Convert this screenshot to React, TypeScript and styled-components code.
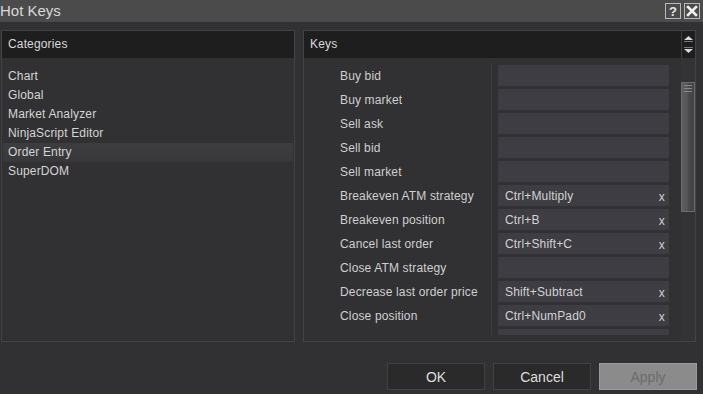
import React from "react";
import styled, { createGlobalStyle } from "styled-components";

const GlobalStyle = createGlobalStyle`
  html, body { margin: 0; padding: 0; background: #313133; overflow: hidden; }
  * { box-sizing: border-box; }
`;

const Window = styled.div`
  width: 703px;
  height: 394px;
  background: #313133;
  display: flex;
  flex-direction: column;
  font-family: "Liberation Sans", Arial, sans-serif;
  color: #d2d2d2;
`;

const TitleBar = styled.div`
  height: 22px;
  background: #4b4b4b;
  display: flex;
  align-items: center;
  justify-content: space-between;
  padding-right: 3px;
  flex-shrink: 0;
`;

const Title = styled.div`
  font-size: 15px;
  color: #d8d8d8;
  line-height: 22px;
`;

const TitleButtons = styled.div`
  display: flex;
  gap: 3px;
`;

const TitleButton = styled.div`
  width: 16px;
  height: 16px;
  border: 1px solid #b8b8b8;
  background: #4b4b4b;
  display: flex;
  align-items: center;
  justify-content: center;
  color: #e8e8e8;
  font-weight: bold;
  font-size: 13px;
  line-height: 1;
`;

const Panels = styled.div`
  display: flex;
  gap: 8px;
  padding: 8px 7px 0 1px;
  height: 320px;
  flex-shrink: 0;
`;

const Panel = styled.div<{ $width?: number }>`
  border: 1px solid #434345;
  display: flex;
  flex-direction: column;
  ${(p) => (p.$width ? `width: ${p.$width}px;` : `flex: 1;`)}
  min-width: 0;
`;

const Header = styled.div`
  height: 27px;
  background: #1e1e1e;
  display: flex;
  flex-shrink: 0;
`;

const HeaderLabel = styled.div<{ $pad: number }>`
  flex: 1;
  font-size: 12px;
  letter-spacing: 0.15px;
  line-height: 27px;
  padding-left: ${(p) => p.$pad}px;
  color: #d8d8d8;
`;

const HeaderArrows = styled.div`
  width: 14px;
  border-left: 1px solid #3c3c3c;
  display: flex;
  flex-direction: column;
  align-items: center;
  justify-content: space-between;
  padding: 5px 0 5px;
`;

const CategoryList = styled.div`
  padding: 9px 1px 8px;
  display: flex;
  flex-direction: column;
`;

const CategoryItem = styled.div<{ $selected?: boolean }>`
  height: 19px;
  line-height: 17px;
  padding-top: 1px;
  font-size: 12px;
  letter-spacing: 0.15px;
  padding-left: 5px;
  color: #d4d4d4;
  background: ${(p) =>
    p.$selected ? "linear-gradient(#3d3d3f, #38383a)" : "transparent"};
`;

const KeysBody = styled.div`
  flex: 1;
  display: flex;
  min-height: 0;
`;

const KeysViewport = styled.div`
  flex: 1;
  overflow: hidden;
  padding-top: 5px;
  margin-bottom: 6px;
`;

const KeyRow = styled.div`
  display: grid;
  grid-template-columns: 187px 1fr;
  height: 24px;
`;

const KeyLabel = styled.div`
  padding: 1px 0 0 36px;
  font-size: 12px;
  letter-spacing: 0.15px;
  line-height: 24px;
  color: #cfcfcf;
  white-space: nowrap;
`;

const KeyCell = styled.div`
  border-left: 1px solid #3c3c3e;
  padding: 2px 12px 1px 6px;
`;

const KeyField = styled.div`
  height: 21px;
  background: #3e3d43;
  display: flex;
  align-items: center;
  justify-content: space-between;
  padding: 0 4px 0 7px;
  font-size: 12px;
  letter-spacing: 0.15px;
  color: #d2d2d2;
`;

const ClearX = styled.span`
  font-size: 12px;
  color: #d0d0d0;
  margin-top: 3px;
`;

const ScrollTrack = styled.div`
  width: 14px;
  background: #333335;
  padding-top: 24px;
  display: flex;
  flex-direction: column;
  align-items: center;
`;

const ScrollThumb = styled.div`
  width: 14px;
  height: 130px;
  border: 1px solid #6c6c6c;
  background: linear-gradient(to right, #5e5e5e, #555 45%, #464646 60%, #444);
  display: flex;
  flex-direction: column;
  align-items: flex-end;
  gap: 2px;
  padding: 2px 2px 0 0;
`;

const Grip = styled.div`
  width: 8px;
  height: 1px;
  background: #8a8a8a;
`;

const Footer = styled.div`
  display: flex;
  justify-content: flex-end;
  gap: 8px;
  padding: 21px 6px 0 0;
`;

const Button = styled.div<{ $disabled?: boolean }>`
  width: 98px;
  height: 27px;
  display: flex;
  align-items: center;
  justify-content: center;
  font-size: 14px;
  border: 1px solid ${(p) => (p.$disabled ? "#9a9a9a" : "#414141")};
  background: ${(p) => (p.$disabled ? "#8b8b8b" : "#2a2a2b")};
  color: ${(p) => (p.$disabled ? "#6c6c6c" : "#dedede")};
`;

const categories = [
  "Chart",
  "Global",
  "Market Analyzer",
  "NinjaScript Editor",
  "Order Entry",
  "SuperDOM",
];

const keys: [string, string][] = [
  ["Buy bid", ""],
  ["Buy market", ""],
  ["Sell ask", ""],
  ["Sell bid", ""],
  ["Sell market", ""],
  ["Breakeven ATM strategy", "Ctrl+Multiply"],
  ["Breakeven position", "Ctrl+B"],
  ["Cancel last order", "Ctrl+Shift+C"],
  ["Close ATM strategy", ""],
  ["Decrease last order price", "Shift+Subtract"],
  ["Close position", "Ctrl+NumPad0"],
  ["", ""],
];

const ArrowUp = () => (
  <svg width="9" height="6" viewBox="0 0 9 6">
    <polygon points="4.5,0 9,4 0,4" fill="#d8d8d8" />
    <rect x="0" y="5" width="9" height="1" fill="#777" />
  </svg>
);

const ArrowDown = () => (
  <svg width="9" height="6" viewBox="0 0 9 6">
    <rect x="0" y="0" width="9" height="1" fill="#777" />
    <polygon points="0,2 9,2 4.5,6" fill="#d8d8d8" />
  </svg>
);

const CloseIcon = () => (
  <svg width="12" height="12" viewBox="0 0 12 12">
    <path d="M2 2 L10 10 M10 2 L2 10" stroke="#eeeeee" strokeWidth="2.6" strokeLinecap="square" />
  </svg>
);

export default function App() {
  return (
    <>
      <GlobalStyle />
      <Window>
        <TitleBar>
          <Title>Hot Keys</Title>
          <TitleButtons>
            <TitleButton>?</TitleButton>
            <TitleButton>
              <CloseIcon />
            </TitleButton>
          </TitleButtons>
        </TitleBar>
        <Panels>
          <Panel $width={294}>
            <Header>
              <HeaderLabel $pad={6}>Categories</HeaderLabel>
            </Header>
            <CategoryList>
              {categories.map((c) => (
                <CategoryItem key={c} $selected={c === "Order Entry"}>
                  {c}
                </CategoryItem>
              ))}
            </CategoryList>
          </Panel>
          <Panel>
            <Header>
              <HeaderLabel $pad={6}>Keys</HeaderLabel>
              <HeaderArrows>
                <ArrowUp />
                <ArrowDown />
              </HeaderArrows>
            </Header>
            <KeysBody>
              <KeysViewport>
                {keys.map(([label, value], i) => (
                  <KeyRow key={i}>
                    <KeyLabel>{label}</KeyLabel>
                    <KeyCell>
                      <KeyField>
                        <span>{value}</span>
                        {value && <ClearX>x</ClearX>}
                      </KeyField>
                    </KeyCell>
                  </KeyRow>
                ))}
              </KeysViewport>
              <ScrollTrack>
                <ScrollThumb>
                  <Grip />
                  <Grip />
                  <Grip />
                </ScrollThumb>
              </ScrollTrack>
            </KeysBody>
          </Panel>
        </Panels>
        <Footer>
          <Button>OK</Button>
          <Button>Cancel</Button>
          <Button $disabled>Apply</Button>
        </Footer>
      </Window>
    </>
  );
}
